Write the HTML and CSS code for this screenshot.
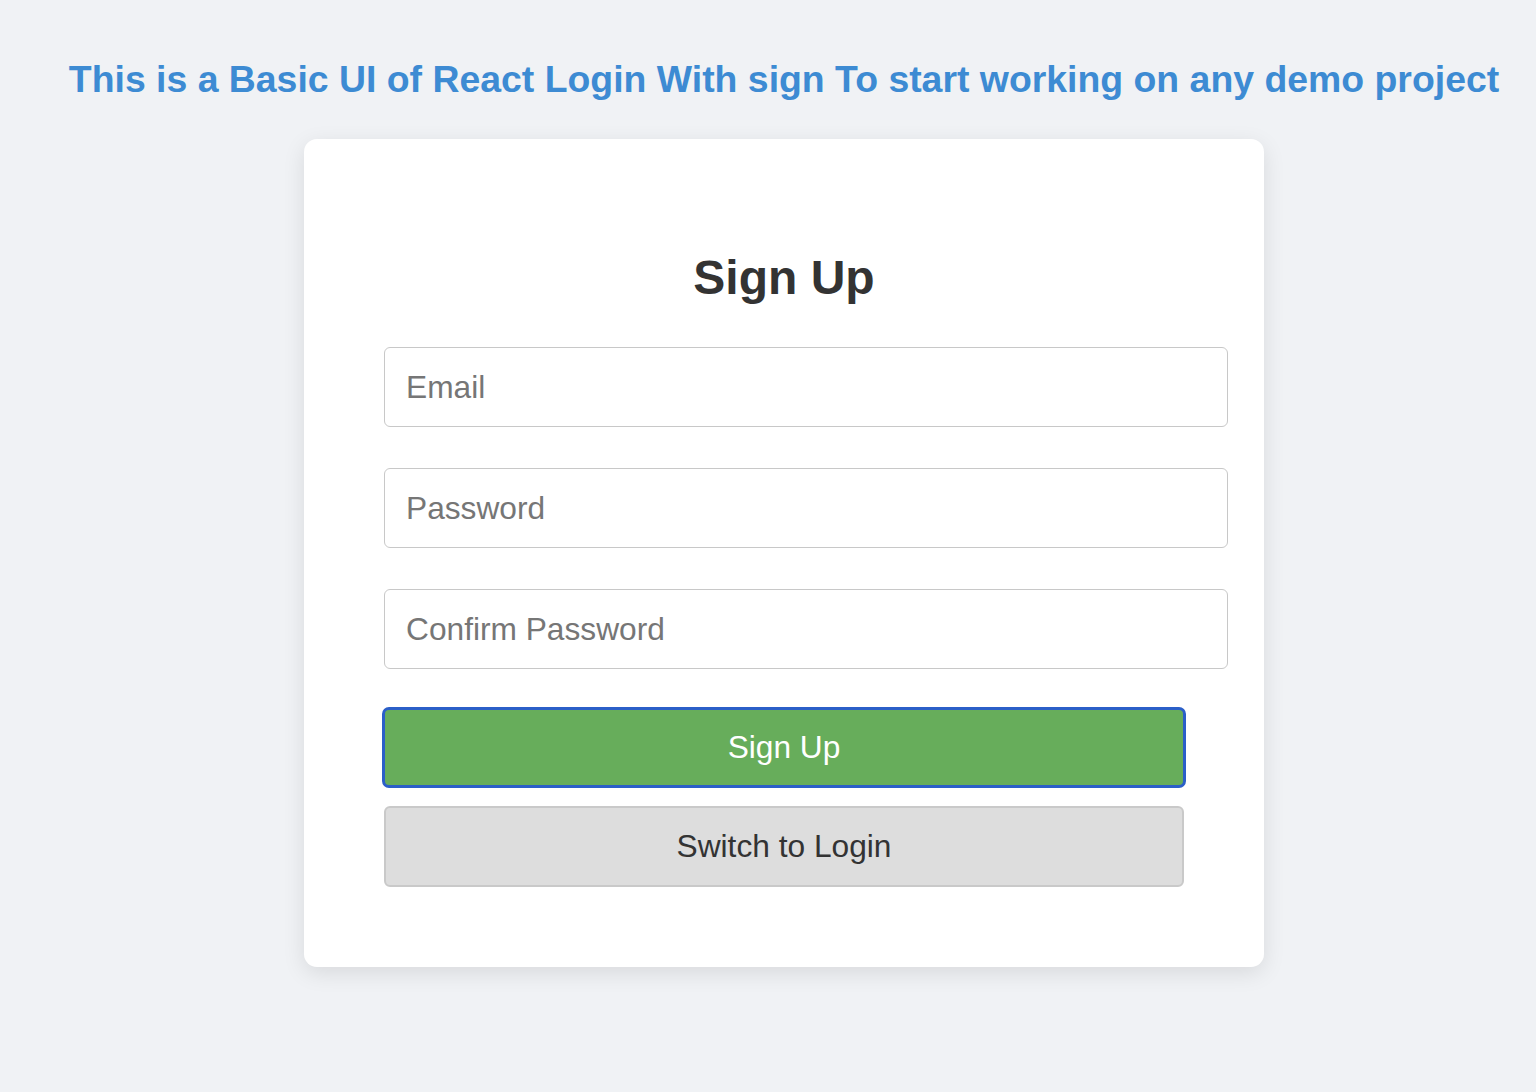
FILE: index.html
```html
<!DOCTYPE html>
<html lang="en">
<head>
<meta charset="utf-8">
<title>Sign Up</title>
<link rel="stylesheet" href="styles.css">
</head>
<body>
<div class="page">
  <h1 class="banner">This is a Basic UI of React Login With sign To start working on any demo project</h1>
  <div class="card">
    <h2 class="card-title">Sign Up</h2>
    <form class="form">
      <input class="field" type="email" placeholder="Email">
      <input class="field" type="password" placeholder="Password">
      <input class="field" type="password" placeholder="Confirm Password">
      <button type="button" class="btn btn-primary">Sign Up</button>
      <button type="button" class="btn btn-secondary">Switch to Login</button>
    </form>
  </div>
</div>
</body>
</html>
```
FILE: styles.css
```css
html, body {
  margin: 0;
  padding: 0;
  background: #f0f2f5;
  font-family: "Liberation Sans", Arial, sans-serif;
}
.page {
  min-height: 1092px;
  padding-left: 32px;
  display: flex;
  flex-direction: column;
  align-items: center;
}
.banner {
  margin: 58px 0 38px;
  font-size: 37.4px;
  font-weight: bold;
  color: #3d8bd3;
  text-align: center;
  white-space: nowrap;
}
.card {
  width: 800px;
  padding: 80px;
  background: #fff;
  border-radius: 13px;
  box-shadow: 0 6px 22px rgba(0, 0, 0, 0.1);
}
.card-title {
  margin: 31px 0 42px;
  text-align: center;
  font-size: 48px;
  font-weight: bold;
  color: #333;
}
.form {
  display: flex;
  flex-direction: column;
  align-items: flex-start;
}
.field {
  width: 100%;
  box-sizing: content-box;
  height: 78px;
  padding: 0 21px;
  margin: 0 0 41px;
  border: 1px solid #c8c8c8;
  border-radius: 6px;
  font-family: "Liberation Sans", Arial, sans-serif;
  font-size: 31.7px;
  color: #333;
  background: #fff;
  outline: none;
}
.field::placeholder { color: #767676; }
.field:last-of-type { margin-bottom: 38px; }
.btn {
  width: 800px;
  height: 81px;
  box-sizing: border-box;
  font-family: "Liberation Sans", Arial, sans-serif;
  font-size: 31.7px;
  border-radius: 6px;
  cursor: pointer;
}
.btn-primary {
  width: 804px;
  margin-left: -2px;
  background: #67ad5b;
  color: #fff;
  border: 3px solid #2b5fc8;
  border-radius: 7px;
}
.btn-secondary {
  margin-top: 18px;
  background: #dddddd;
  color: #333;
  border: 2px solid #c9c9c9;
}
```
